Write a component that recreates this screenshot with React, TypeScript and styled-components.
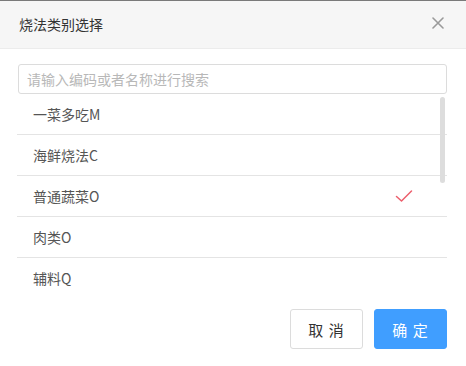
import React, { useState } from "react";
import styled, { createGlobalStyle } from "styled-components";

const GlobalStyle = createGlobalStyle`
  html, body {
    margin: 0;
    padding: 0;
    background: #ffffff;
  }
  body {
    font-family: "Noto Sans CJK SC", "Liberation Sans", sans-serif;
  }
`;

const items = [
  { id: 1, name: "一菜多吃M" },
  { id: 2, name: "海鲜烧法C" },
  { id: 3, name: "普通蔬菜O" },
  { id: 4, name: "肉类O" },
  { id: 5, name: "辅料Q" },
];

export default function App() {
  const [selected, setSelected] = useState(3);

  return (
    <>
      <GlobalStyle />
      <Dialog>
        <Header>
          <Title>烧法类别选择</Title>
          <CloseButton aria-label="close">
            <svg width="12" height="12" viewBox="0 0 12 12">
              <path d="M1 1 L11 11 M11 1 L1 11" stroke="#9a9a9a" strokeWidth="1.6" strokeLinecap="round" />
            </svg>
          </CloseButton>
        </Header>
        <Body>
          <SearchInput placeholder="请输入编码或者名称进行搜索" />
          <ListWrap>
            <List>
              {items.map((item) => (
                <Row key={item.id} onClick={() => setSelected(item.id)}>
                  <RowText>{item.name}</RowText>
                  {selected === item.id && (
                    <Check width="18" height="14" viewBox="0 0 18 14">
                      <path d="M1.5 7.5 L6.5 12 L16.5 2" fill="none" stroke="#ec5f6c" strokeWidth="1.5" strokeLinecap="round" strokeLinejoin="round" />
                    </Check>
                  )}
                </Row>
              ))}
            </List>
            <ScrollThumb />
          </ListWrap>
          <Footer>
            <Button>取 消</Button>
            <Button $primary>确 定</Button>
          </Footer>
        </Body>
      </Dialog>
    </>
  );
}

const Dialog = styled.div`
  width: 466px;
  height: 366px;
  display: flex;
  flex-direction: column;
  border-top: 1px solid #7a7a7a;
  box-sizing: border-box;
`;

const Header = styled.div`
  height: 47px;
  display: flex;
  align-items: center;
  justify-content: space-between;
  padding: 0 22px 0 19px;
  background: #f6f6f6;
  border-bottom: 1px solid #ececec;
`;

const Title = styled.div`
  font-size: 14px;
  color: #333333;
  margin-top: -1px;
`;

const CloseButton = styled.span`
  display: flex;
  width: 12px;
  height: 12px;
  margin-top: -4px;
  cursor: pointer;
`;

const Body = styled.div`
  display: flex;
  flex-direction: column;
  padding: 15px 19px 0 17px;
`;

const SearchInput = styled.input`
  box-sizing: border-box;
  width: 429px;
  height: 30px;
  margin-left: 1px;
  padding: 0 8px;
  border: 1px solid #dcdcdc;
  border-radius: 3px;
  font-family: "Noto Sans CJK SC", "Liberation Sans", sans-serif;
  font-size: 14px;
  color: #333;
  outline: none;
  &::placeholder {
    color: #b8b8b8;
  }
`;

const ListWrap = styled.div`
  position: relative;
  height: 207px;
`;

const List = styled.div`
  display: flex;
  flex-direction: column;
`;

const Row = styled.div`
  height: 40px;
  display: flex;
  align-items: center;
  justify-content: space-between;
  padding: 0 34px 0 16px;
  border-bottom: 1px solid #e4e4e4;
  cursor: pointer;
  &:last-child {
    border-bottom: none;
  }
`;

const RowText = styled.span`
  font-size: 14px;
  color: #555555;
`;

const Check = styled.svg`
  display: block;
`;

const ScrollThumb = styled.div`
  position: absolute;
  right: 2px;
  top: 3px;
  width: 5px;
  height: 86px;
  border-radius: 3px;
  background: #dddddd;
`;

const Footer = styled.div`
  display: flex;
  justify-content: flex-end;
  gap: 11px;
  margin-top: 8px;
`;

const Button = styled.button<{ $primary?: boolean }>`
  box-sizing: border-box;
  width: 73px;
  height: 40px;
  border-radius: 3px;
  border: 1px solid ${({ $primary }) => ($primary ? "#409eff" : "#dcdcdc")};
  background: ${({ $primary }) => ($primary ? "#409eff" : "#ffffff")};
  color: ${({ $primary }) => ($primary ? "#ffffff" : "#333333")};
  font-family: "Noto Sans CJK SC", "Liberation Sans", sans-serif;
  font-size: 15px;
  letter-spacing: 1px;
  cursor: pointer;
`;
